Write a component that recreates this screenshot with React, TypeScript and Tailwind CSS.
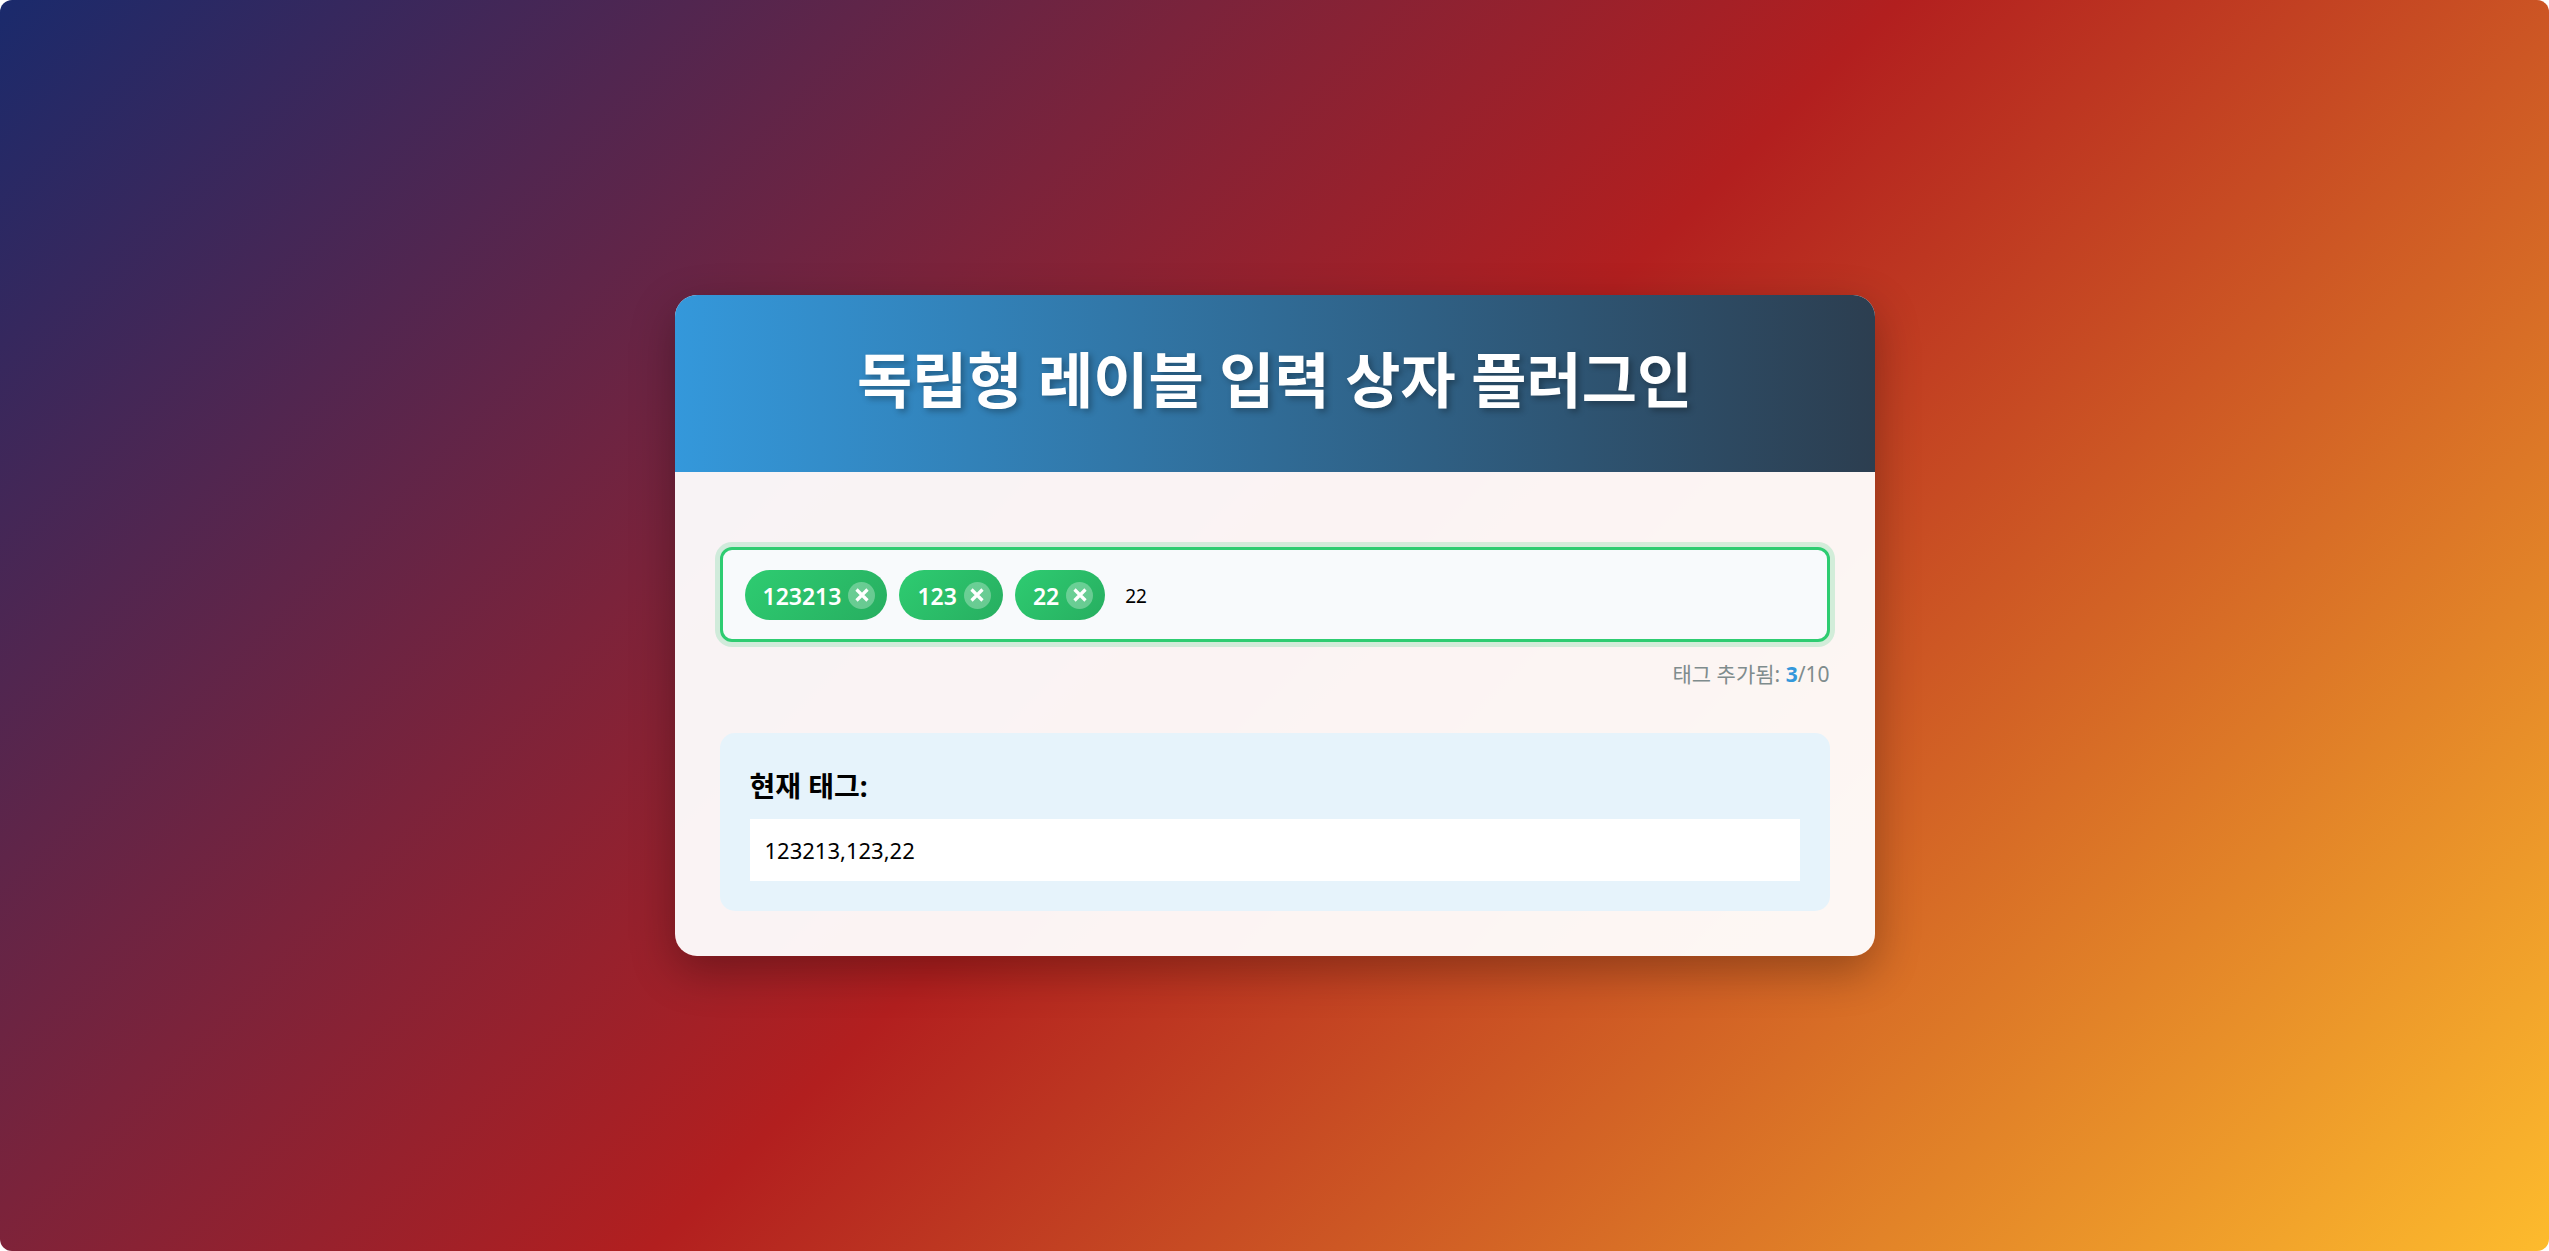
import { useState } from "react";
import type { KeyboardEvent } from "react";

const MAX_TAGS = 10;

function Tag({ label, onRemove }: { label: string; onRemove: () => void }) {
  return (
    <li className="flex h-[50px] items-center gap-[7px] rounded-full bg-[linear-gradient(135deg,#2ecc71,#27ae60)] pr-3 pl-[18px] text-[23px] font-semibold text-white">
      <span className="pt-0.5">{label}</span>
      <button
        type="button"
        aria-label={`${label} 삭제`}
        onClick={onRemove}
        className="flex size-[27px] items-center justify-center rounded-full bg-white/30"
      >
        <svg viewBox="0 0 14 14" className="size-[14px]" fill="none" stroke="currentColor" strokeWidth="3.2" aria-hidden="true">
          <path d="M1.5 1.5 12.5 12.5M12.5 1.5 1.5 12.5" />
        </svg>
      </button>
    </li>
  );
}

export default function App() {
  const [tags, setTags] = useState(["123213", "123", "22"]);
  const [draft, setDraft] = useState("22");

  const handleKeyDown = (event: KeyboardEvent<HTMLInputElement>) => {
    const value = draft.trim();
    if (event.key === "Enter" && value && !tags.includes(value) && tags.length < MAX_TAGS) {
      setTags([...tags, value]);
      setDraft("");
    }
  };

  return (
    <div className="bg-white font-['Noto_Sans','Noto_Sans_CJK_KR',sans-serif] text-black">
      <div className="flex min-h-screen items-center justify-center rounded-xl bg-[linear-gradient(135deg,#1a2a6c,#b21f1f,#fdbb2d)] p-8">
        <main className="w-full max-w-[1200px] overflow-hidden rounded-[22px] bg-white/95 shadow-[0_15px_45px_rgba(0,0,0,0.3)]">
          <header className="bg-[linear-gradient(90deg,#3498db,#2c3e50)] px-[45px] pt-[45px] pb-[52px] text-center">
            <h1 className="text-[60px] leading-[80px] font-bold text-white [text-shadow:3px_3px_6px_rgba(0,0,0,0.3)]">
              독립형 레이블 입력 상자 플러그인
            </h1>
          </header>

          <div className="px-[45px] pt-[75px] pb-[45px]">
            <div className="flex flex-wrap items-center gap-3 rounded-xl border-3 border-[#2ecc71] bg-[#f8fafc] px-[22px] pt-5 pb-[19px] shadow-[0_0_0_5px_rgba(46,204,113,0.2)]">
              <ul className="flex flex-wrap gap-3">
                {tags.map((tag) => (
                  <Tag key={tag} label={tag} onRemove={() => setTags(tags.filter((item) => item !== tag))} />
                ))}
              </ul>
              <input
                type="text"
                aria-label="태그 입력"
                value={draft}
                onChange={(event) => setDraft(event.target.value)}
                onKeyDown={handleKeyDown}
                className="min-w-[180px] flex-1 bg-transparent px-2 pt-0.5 text-[19px] outline-none"
              />
            </div>

            <p className="mt-4 text-right text-[21px] leading-8 text-[#7f8c8d]">
              태그 추가됨: <span className="font-bold text-[#3498db]">{tags.length}</span>/{MAX_TAGS}
            </p>

            <section className="mt-[43px] rounded-[15px] bg-[#e6f3fb] p-[30px]">
              <h2 className="text-[28px] leading-[46px] font-bold">현재 태그:</h2>
              <div className="mt-2.5 bg-white p-[15px] text-[22px] leading-8">{tags.join(",")}</div>
            </section>
          </div>
        </main>
      </div>
    </div>
  );
}
